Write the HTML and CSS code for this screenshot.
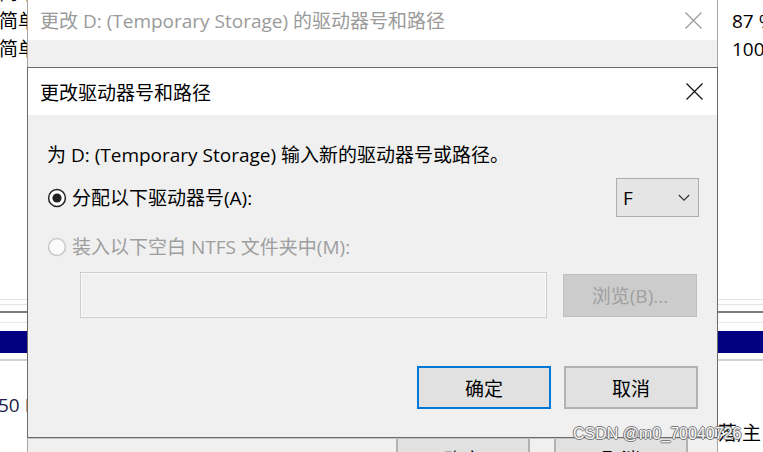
FILE: index.html
```html
<!DOCTYPE html>
<html lang="zh-CN">
<head>
<meta charset="utf-8">
<title>更改驱动器号和路径</title>
<link rel="stylesheet" href="styles.css">
</head>
<body>
<div class="screen">
  <div class="desk">
    <div class="list">
      <div class="row"><span class="cell-l">简单</span><span class="cell-r">100 %</span></div>
      <div class="row"><span class="cell-l">简单</span><span class="cell-r">87 %</span></div>
      <div class="row"><span class="cell-l">简单</span><span class="cell-r">100 %</span></div>
    </div>
    <div class="diskmap">
      <div class="ln ln-a"></div>
      <div class="ln ln-b"></div>
      <div class="ln ln-c"></div>
      <div class="ln ln-d"></div>
      <div class="navy"></div>
      <div class="ln ln-e"></div>
    </div>
    <div class="disk-size">50 M</div>
    <div class="disk-info">落,主</div>
  </div>

  <div class="win win-back">
    <div class="titlebar back-title">
      <span class="title-text">更改 D: (Temporary Storage) 的驱动器号和路径</span>
      <svg class="close" width="17" height="17" viewBox="0 0 17 17"><path d="M0.5 0.5 L16.5 16.5 M16.5 0.5 L0.5 16.5" stroke="#9a9a9a" stroke-width="1.2" fill="none"/></svg>
    </div>
    <div class="back-body">
      <div class="btn-row back-btns">
        <div class="btn back-btn">确定</div>
        <div class="btn back-btn back-btn2">取消</div>
      </div>
    </div>
  </div>

  <div class="win win-front">
    <div class="titlebar front-title">
      <span class="title-text">更改驱动器号和路径</span>
      <svg class="close" width="17" height="17" viewBox="0 0 17 17"><path d="M0.5 0.5 L16.5 16.5 M16.5 0.5 L0.5 16.5" stroke="#111" stroke-width="1.2" fill="none"/></svg>
    </div>
    <div class="fbody">
      <div class="prompt">为 D: (Temporary Storage) 输入新的驱动器号或路径。</div>
      <div class="opt-row">
        <div class="radio-label">
          <svg class="radio" width="20" height="20" viewBox="0 0 20 20"><circle cx="10" cy="10" r="8.4" fill="#fff" stroke="#222" stroke-width="1.5"/><circle cx="10" cy="10" r="4.6" fill="#222"/></svg>
          <span>分配以下驱动器号(A):</span>
        </div>
        <div class="combo">
          <span>F</span>
          <svg width="12" height="8" viewBox="0 0 12 8"><path d="M0.8 1 L6 6.2 L11.2 1" stroke="#333" stroke-width="1.1" fill="none"/></svg>
        </div>
      </div>
      <div class="radio-label disabled opt2">
        <svg class="radio" width="20" height="20" viewBox="0 0 20 20"><circle cx="10" cy="10" r="8.4" fill="#fbfbfb" stroke="#c8c8c8" stroke-width="1.5"/></svg>
        <span>装入以下空白 NTFS 文件夹中(M):</span>
      </div>
      <div class="path-row">
        <div class="path-input"></div>
        <div class="btn btn-disabled">浏览(B)...</div>
      </div>
      <div class="btn-row front-btns">
        <div class="btn btn-default">确定</div>
        <div class="btn">取消</div>
      </div>
    </div>
  </div>

  <div class="watermark">CSDN @m0_70040726</div>
</div>
</body>
</html>
```

FILE: styles.css
```css
* { box-sizing: border-box; }
html, body { margin: 0; padding: 0; }
body {
  width: 763px;
  height: 452px;
  overflow: hidden;
  background: #fff;
  font-family: "Open Sans", "Noto Sans CJK SC", sans-serif;
  font-size: 19px;
  color: #000;
}
.screen {
  position: relative;
  width: 763px;
  height: 452px;
  overflow: hidden;
}

/* background window content */
.desk { display: flex; flex-direction: column; }
.list { margin-top: -21px; }
.row { display: flex; height: 28px; line-height: 28px; white-space: nowrap; }
.cell-l { flex: none; width: 733px; margin-left: -1px; }
.cell-r { flex: none; }
.diskmap { display: flex; flex-direction: column; }
.ln { height: 1px; background: #e4e4e4; }
.ln-a { margin-top: 236px; }
.ln-b { margin-top: 4px; }
.ln-c { margin-top: 6px; height: 2px; background: #7c7c7c; }
.ln-d { margin-top: 9px; background: #e8e8e8; }
.navy { margin-top: 8px; height: 22px; background: #000080; }
.ln-e { margin-top: 6px; height: 2px; background: #d2d2d2; }
.disk-size { margin-top: 32px; margin-left: -2px; line-height: 24px; height: 24px; color: #1c1c48; white-space: nowrap; }
.disk-info { margin-top: 4px; margin-left: 718px; line-height: 24px; white-space: nowrap; }

/* windows */
.win {
  position: absolute;
  left: 27px;
  width: 691px;
  display: flex;
  flex-direction: column;
}
.titlebar {
  display: flex;
  align-items: center;
  justify-content: space-between;
  background: #fff;
  padding-left: 12px;
  padding-right: 14px;
  white-space: nowrap;
}
.close { flex: none; }

.win-back {
  top: -1px;
  height: 480px;
  border: 1px solid #a6a6a6;
  background: #f0f0f0;
}
.back-title { height: 45px; color: #9a9a9a; padding-right: 15px; }
.back-body { flex: 1; padding: 395px 29px 0 0; }
.back-btns { gap: 24px; }
.back-btn { padding-top: 4px; }
.back-btn2 { width: 133px; }

.win-front {
  top: 67px;
  height: 371px;
  border: 1px solid #6a6a6a;
  box-shadow: 0 1px 0 #c4c4c4;
}
.front-title { height: 47px; }
.fbody {
  flex: 1;
  background: #f0f0f0;
  padding: 28px 19px 0 19px;
  display: flex;
  flex-direction: column;
}
.prompt { height: 24px; line-height: 24px; white-space: nowrap; }
.opt-row {
  margin-top: 11px;
  height: 39px;
  display: flex;
  align-items: center;
  justify-content: space-between;
}
.radio-label {
  display: flex;
  align-items: center;
  gap: 5px;
  height: 24px;
  line-height: 24px;
  white-space: nowrap;
}
.radio { flex: none; }
.disabled { color: #9e9e9e; }
.opt2 { margin-top: 18px; }
.combo {
  width: 83px;
  height: 39px;
  margin-right: -1px;
  background: #e5e5e5;
  border: 1px solid #adadad;
  display: flex;
  align-items: center;
  justify-content: space-between;
  padding: 0 8px 0 6px;
}
.path-row {
  margin-top: 13px;
  height: 46px;
  display: flex;
  align-items: center;
  padding-left: 33px;
}
.path-input {
  width: 467px;
  height: 46px;
  border: 1px solid #cdcdcd;
  box-shadow: inset 0 0 0 1px #fafafa;
  background: #f0f0f0;
}
.btn {
  width: 134px;
  height: 43px;
  display: flex;
  align-items: center;
  justify-content: center;
  background: #e1e1e1;
  border: 2px solid #b2b2b2;
  white-space: nowrap;
  flex: none;
}
.btn-disabled {
  margin-left: 16px;
  background: #cccccc;
  border: 1px solid #bfbfbf;
  color: #a0a0a0;
}
.btn-row { display: flex; justify-content: flex-end; }
.front-btns { margin-top: 48px; gap: 13px; }
.btn-default { border-color: #0078d7; }

.watermark {
  position: absolute;
  left: 573px;
  top: 423px;
  font-family: "Liberation Sans", Arial, sans-serif;
  font-size: 16px;
  line-height: 22px;
  color: #f6f6f6;
  white-space: nowrap;
  text-shadow: 1px 0 0 #7a7a7a, -1px 0 0 #7a7a7a, 0 1px 0 #7a7a7a, 0 -1px 0 #7a7a7a;
}
```
